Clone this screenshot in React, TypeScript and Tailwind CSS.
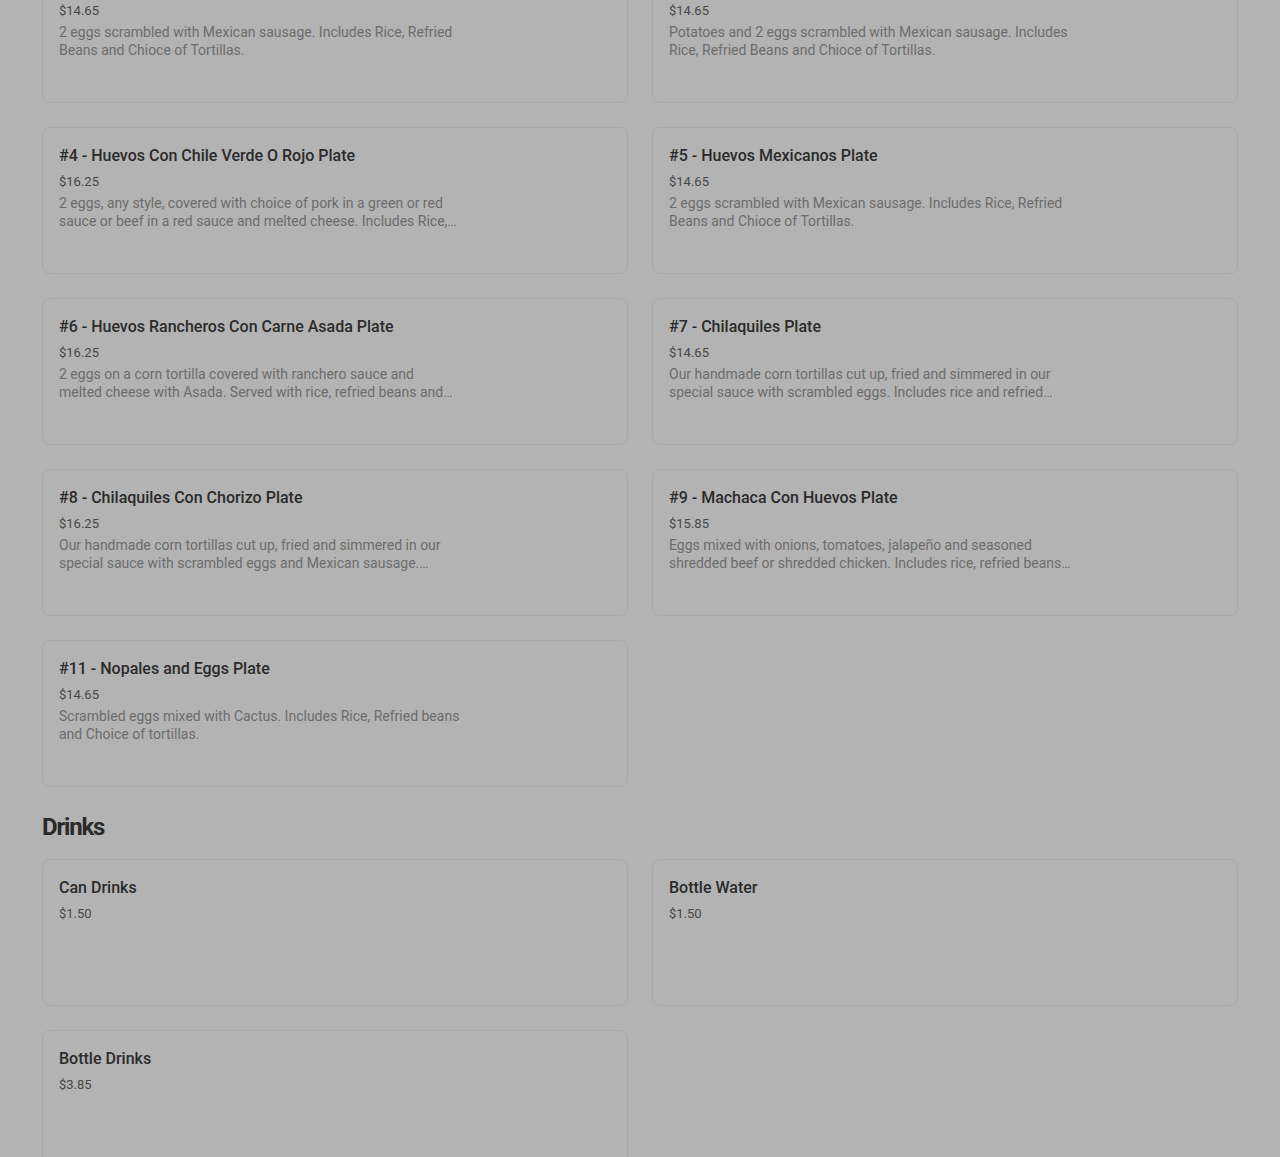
const font = { fontFamily: 'Roboto, "Liberation Sans", Arial, sans-serif' }

type Item = { title: string; price: string; desc?: string }

const breakfast: Item[] = [
  {
    title: '#2 - Chorizo Con Huevos Plate',
    price: '$14.65',
    desc: '2 eggs scrambled with Mexican sausage. Includes Rice, Refried Beans and Chioce of Tortillas.',
  },
  {
    title: '#3 - Papas Con Chorizo Plate',
    price: '$14.65',
    desc: 'Potatoes and 2 eggs scrambled with Mexican sausage. Includes Rice, Refried Beans and Chioce of Tortillas.',
  },
  {
    title: '#4 - Huevos Con Chile Verde O Rojo Plate',
    price: '$16.25',
    desc: '2 eggs, any style, covered with choice of pork in a green or red sauce or beef in a red sauce and melted cheese. Includes Rice, Refried Beans and Choice of Tortillas.',
  },
  {
    title: '#5 - Huevos Mexicanos Plate',
    price: '$14.65',
    desc: '2 eggs scrambled with Mexican sausage. Includes Rice, Refried Beans and Chioce of Tortillas.',
  },
  {
    title: '#6 - Huevos Rancheros Con Carne Asada Plate',
    price: '$16.25',
    // nbsp keeps "melted cheese" together so the wrap falls where the original's does
    desc: '2 eggs on a corn tortilla covered with ranchero sauce and melted\u00a0cheese with Asada. Served with rice, refried beans and tortillas.',
  },
  {
    title: '#7 - Chilaquiles Plate',
    price: '$14.65',
    desc: 'Our handmade corn tortillas cut up, fried and simmered in our special sauce with scrambled eggs. Includes rice and refried beans.',
  },
  {
    title: '#8 - Chilaquiles Con Chorizo Plate',
    price: '$16.25',
    desc: 'Our handmade corn tortillas cut up, fried and simmered in our special sauce with scrambled eggs and Mexican sausage. Includes rice and beans.',
  },
  {
    title: '#9 - Machaca Con Huevos Plate',
    price: '$15.85',
    desc: 'Eggs mixed with onions, tomatoes, jalapeño and seasoned shredded beef or shredded chicken. Includes rice, refried beans and tortillas.',
  },
  {
    title: '#11 - Nopales and Eggs Plate',
    price: '$14.65',
    desc: 'Scrambled eggs mixed with Cactus. Includes Rice, Refried beans and Choice of tortillas.',
  },
]

const drinks: Item[] = [
  { title: 'Can Drinks', price: '$1.50' },
  { title: 'Bottle Water', price: '$1.50' },
  { title: 'Bottle Drinks', price: '$3.85' },
]

function MenuCard({ item }: { item: Item }) {
  return (
    <div className="h-[147px] rounded-lg border border-[#a9a9a9] px-4 pt-4">
      <div className="text-[16px] leading-6 font-medium text-[#2b2b2b]">{item.title}</div>
      <div className="mt-1 text-[13px] leading-5 text-[#474747]">{item.price}</div>
      {item.desc && (
        <p className="mt-[2px] max-w-[412px] text-[14px] leading-[18px] text-[#6c6c6c] line-clamp-2">
          {item.desc}
        </p>
      )}
    </div>
  )
}

export default function App() {
  return (
    <div className="min-h-screen overflow-hidden bg-[#b3b3b3]" style={font}>
      <div className="pl-[42px] pr-[42px] -mt-[44px]">
        <div className="grid grid-cols-2 gap-6">
          {breakfast.map((it) => (
            <MenuCard key={it.title} item={it} />
          ))}
        </div>

        <h2 className="mt-6 mb-4 text-[24px] leading-8 font-bold tracking-[-0.05em] text-[#2a2a2a]">
          Drinks
        </h2>

        <div className="grid grid-cols-2 gap-6">
          {drinks.map((it) => (
            <MenuCard key={it.title} item={it} />
          ))}
        </div>
      </div>
    </div>
  )
}
